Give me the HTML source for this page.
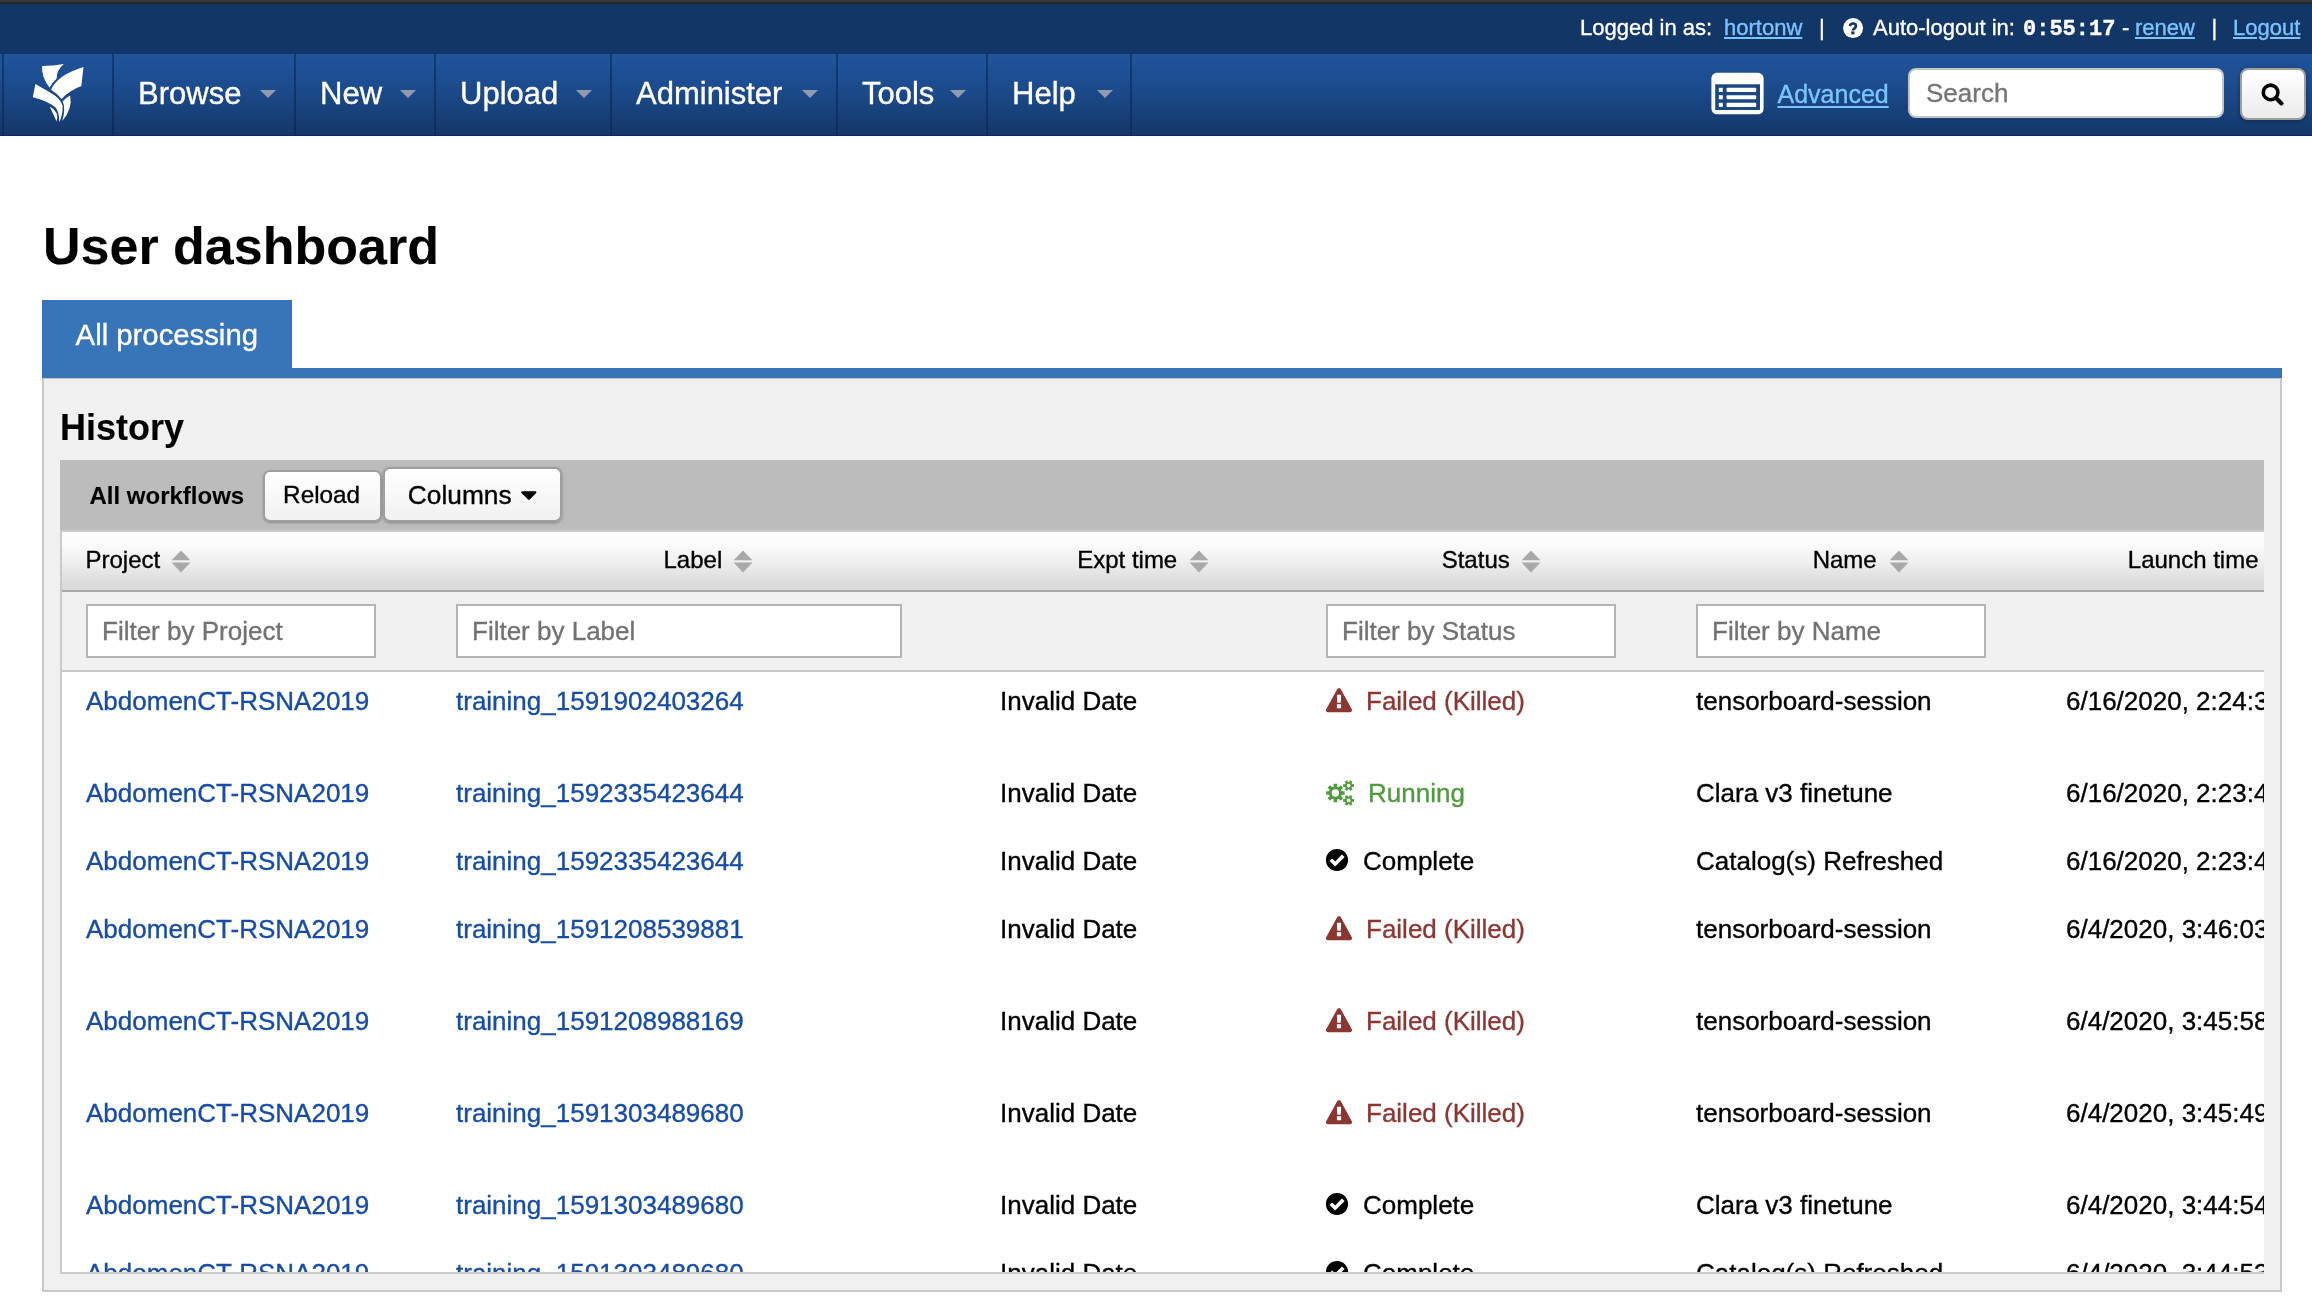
<!DOCTYPE html>
<html lang="en">
<head>
<meta charset="utf-8">
<title>User dashboard</title>
<style>
*{box-sizing:border-box;margin:0;padding:0}
html,body{width:2312px;height:1316px;overflow:hidden;background:#fff}
body{font-family:"Liberation Sans",sans-serif;color:#000;position:relative;-webkit-text-stroke:0.35px}
#root{position:absolute;left:0;top:0;width:2312px;height:1316px;will-change:transform}
.abs{position:absolute}
a{color:inherit;text-decoration:none}
/* ---------- top chrome strip ---------- */
#strip{left:0;top:0;width:2312px;height:4px;background:linear-gradient(#36373a 0,#36373a 2px,#282725 2px,#282725 4px)}
/* ---------- user bar ---------- */
#userbar{left:0;top:4px;width:2312px;height:50px;background:#123766;color:#fff;font-size:22px;line-height:48px;white-space:nowrap}
#userbar .t{position:absolute;top:0}
#userbar a{color:#7cc3ff;text-decoration:underline}
/* ---------- main nav ---------- */
#nav{left:0;top:54px;width:2312px;height:82px;background:linear-gradient(#20539a 0%,#1d4d90 35%,#18427c 70%,#143768 100%);border-bottom:1px solid #082a64}
#nav .sep{position:absolute;top:0;width:2px;height:81px;background:rgba(10,35,80,.55)}
#nav .item{position:absolute;top:0;height:81px;line-height:80px;color:#fff;font-size:31px;white-space:nowrap}
#nav .caret{position:absolute;top:36px;width:0;height:0;border-left:8px solid transparent;border-right:8px solid transparent;border-top:8px solid #929aad}
#adv{color:#7cc4ff;font-size:25px;line-height:78px;text-decoration:underline;text-decoration-thickness:2px;text-underline-offset:3px;white-space:nowrap}
#sbox{left:1908px;top:14px;width:316px;height:50px;background:#fff;border:2px solid #c4c4c4;border-radius:8px;font-size:26px;color:#757575;line-height:47px;padding-left:16px}
#sbtn{left:2240px;top:14px;width:66px;height:52px;border:2px solid #a19e99;border-radius:8px;background:linear-gradient(#fff,#ebebeb);box-shadow:0 1px 4px rgba(0,0,0,.35)}
/* ---------- page title ---------- */
#title{-webkit-text-stroke:0.1px;left:43px;top:212px;font-size:52px;font-weight:bold;line-height:68px;white-space:nowrap}
/* ---------- tab ---------- */
#tab{left:42px;top:300px;width:250px;height:70px;background:#3775b8;color:#fff;font-size:29.3px;line-height:70px;padding-left:33.6px;white-space:nowrap}
#tabline{left:42px;top:368px;width:2240px;height:10px;background:#3775b8}
/* ---------- panel ---------- */
#panel{left:42px;top:378px;width:2240px;height:914px;background:#f0f0f0;border:2px solid #c9c9c9;border-top:1.5px solid #c4c4c4}
#history{-webkit-text-stroke:0.1px;left:60px;top:405px;font-size:36px;font-weight:bold;line-height:46px}
#tbl{left:60px;top:460px;width:2204px;height:814px;background:#fff;overflow:hidden}
.tb{background:#bcbcbc}
.b24{-webkit-text-stroke:0.1px;font-size:24px;font-weight:bold;line-height:28px;white-space:nowrap}
.btn{border:2px solid #9e9e9e;border-radius:7px;background:linear-gradient(#fff,#f1f1f1);white-space:nowrap;color:#000}
.lb,.bb{background:#cacaca}
.hd{background:linear-gradient(#fdfdfd 0,#fbfbfb 13px,#efefef 29px,#e2e2e2 44px,#dcdcdc 52px,#dbdbdb 58px,#a9a9a9 58px,#a9a9a9 60px)}
.th{font-size:24px;line-height:28px;white-space:nowrap}
.fr{background:linear-gradient(#f0f0f0 0,#f0f0f0 78px,#c8c8c8 78px,#c8c8c8 80px)}
.fi{height:54px;border:2px solid #b4b4b4;background:#fff;font-size:26px;line-height:50px;color:#727272;padding-left:14px;white-space:nowrap;overflow:hidden}
.td{font-size:26px;line-height:30px;white-space:nowrap}
.lk{color:#184da5}
</style>
</head>
<body>
<div id="root">
<div id="strip" class="abs"></div>
<div id="userbar" class="abs">
<span class="t" style="left:1580px">Logged in as:</span>
<a class="t" style="left:1724px">hortonw</a>
<span class="t" style="left:1819px">|</span>
<svg class="t" style="left:1842.6px;top:13.9px" width="21" height="21" viewBox="0 0 21 21"><circle cx="10.1" cy="10.1" r="10" fill="#fff"/><path d="M7 8.1C7.3 6.3 8.5 5.5 10 5.5C11.7 5.5 12.9 6.5 12.9 8C12.9 9.3 12.1 9.9 11.2 10.6C10.3 11.2 9.9 11.7 9.9 12.5" fill="none" stroke="#123766" stroke-width="2.7"/><rect x="8.3" y="13.4" width="3.2" height="3" fill="#123766"/></svg>
<span class="t" style="left:1873px">Auto-logout in:</span>
<span class="t" style="left:2023px;font-family:'Liberation Mono',monospace;font-weight:bold;font-size:22px;top:1.5px">0:55:17</span>
<span class="t" style="left:2122px">-</span>
<a class="t" style="left:2135px">renew</a>
<span class="t" style="left:2211.5px">|</span>
<a class="t" style="left:2233px">Logout</a>
</div>
<div id="nav" class="abs">
<div class="sep" style="left:2px"></div>
<div class="sep" style="left:112px"></div>
<svg class="abs" style="left:20px;top:1px" width="80" height="75" viewBox="20 55 80 75" fill="#fff">
<path d="M42.2 66.1Q53 65.9 63.9 64.1Q56.3 70.5 56.7 78.4Q52.3 82.2 49.6 87.8Q41 76.5 42.2 66.1Z"/>
<path d="M83.5 67L81.3 86.1Q69.5 90.5 61.6 98.9Q57 93.5 51.1 89.8C55 80 66 72.5 83.5 67Z"/>
<path d="M35.4 84.1L32.8 97.2Q49 101.5 55.5 107.5Q59.3 112 59.3 122.2Q63.5 113 62.5 105.5Q60.5 98.5 51 93Z"/>
<path d="M49.7 106.6L56.6 121.4Q59.6 111.8 49.7 106.6Z"/>
<path d="M70.1 95.5Q65.5 98 62.7 101.2Q66 109 62.2 121.1Q73 108.5 70.1 95.5Z"/>
</svg>
<div class="item" style="left:138px">Browse</div><div class="caret" style="left:260px"></div><div class="sep" style="left:294px"></div>
<div class="item" style="left:320px">New</div><div class="caret" style="left:400px"></div><div class="sep" style="left:434px"></div>
<div class="item" style="left:460px">Upload</div><div class="caret" style="left:576px"></div><div class="sep" style="left:610px"></div>
<div class="item" style="left:636px">Administer</div><div class="caret" style="left:802px"></div><div class="sep" style="left:836px"></div>
<div class="item" style="left:862px">Tools</div><div class="caret" style="left:950px"></div><div class="sep" style="left:986px"></div>
<div class="item" style="left:1012px">Help</div><div class="caret" style="left:1097px"></div><div class="sep" style="left:1130px"></div>
<svg class="abs" style="left:1711px;top:18px" width="54" height="44" viewBox="0 0 54 44"><rect x="0.4" y="0.8" width="52.2" height="41.5" rx="5.5" fill="#fff"/><rect x="4.2" y="12.3" width="44.8" height="25.7" fill="#1b4783"/><g fill="#fff"><rect x="7.8" y="15.8" width="4" height="4.1"/><rect x="15.5" y="15.8" width="29.7" height="4.1" rx="1"/><rect x="7.8" y="23.2" width="4" height="4.1"/><rect x="15.5" y="23.2" width="29.7" height="4.1" rx="1"/><rect x="7.8" y="30.8" width="4" height="4.1"/><rect x="15.5" y="30.8" width="29.7" height="4.1" rx="1"/></g></svg>
<a class="abs" id="adv" style="left:1777.5px;top:1px">Advanced</a>
<div class="abs" id="sbox"><span>Search</span></div>
<div class="abs" id="sbtn"><svg width="30" height="30" viewBox="0 0 30 30" style="position:absolute;left:16px;top:10.2px"><circle cx="12.6" cy="12.4" r="7.3" fill="none" stroke="#000" stroke-width="3.6"/><path d="M18 18L23.5 23.4" stroke="#000" stroke-width="4.2" stroke-linecap="round"/></svg></div>
</div>
<div id="title" class="abs">User dashboard</div>
<div id="tab" class="abs">All processing</div>
<div id="tabline" class="abs"></div>
<div id="panel" class="abs"></div>
<div id="history" class="abs">History</div>
<div id="tbl" class="abs">
<div class="tb abs" style="left:0;top:0;width:2204px;height:70px"></div>
<div class="abs b24" style="left:29.5px;top:22.3px">All workflows</div>
<div class="btn abs" style="left:202.5px;top:10px;width:119.5px;height:51.5px;font-size:24.3px;line-height:46px;padding-left:18.6px;box-shadow:0 1px 2px rgba(0,0,0,.25)">Reload</div>
<div class="btn abs" style="left:322.8px;top:6.5px;width:179.6px;height:55.8px;font-size:26.3px;line-height:53px;padding-left:23px;box-shadow:0 1px 3px rgba(0,0,0,.3)">Columns<svg class="abs" style="left:136.5px;top:22.5px" width="16" height="10" viewBox="0 0 16 10"><path d="M1.2 0.3h13.2a1 1 0 0 1 .75 1.7l-6.4 6.6a1.2 1.2 0 0 1-1.7 0L.5 2A1 1 0 0 1 1.2.3z" fill="#000"/></svg></div>
<div class="lb abs" style="left:0;top:70px;width:2px;height:744px"></div>
<div class="lb abs" style="left:0;top:70px;width:2204px;height:2px"></div>
<div class="hd abs" style="left:2px;top:72px;width:2202px;height:60px"></div>
<div class="abs th" style="left:25.5px;top:86px">Project</div>
<svg class="abs" style="left:111.2px;top:89.5px" width="20" height="23" viewBox="0 0 20 23"><path d="M10 .5l9.4 9.8H.6z" fill="#a9a9a9"/><path d="M10 22.5L.6 12.6h18.8z" fill="#a9a9a9"/></svg>
<div class="abs th" style="left:603.5px;top:86px">Label</div>
<svg class="abs" style="left:673px;top:89.5px" width="20" height="23" viewBox="0 0 20 23"><path d="M10 .5l9.4 9.8H.6z" fill="#a9a9a9"/><path d="M10 22.5L.6 12.6h18.8z" fill="#a9a9a9"/></svg>
<div class="abs th" style="left:1017.2px;top:86px">Expt time</div>
<svg class="abs" style="left:1129.2px;top:89.5px" width="20" height="23" viewBox="0 0 20 23"><path d="M10 .5l9.4 9.8H.6z" fill="#a9a9a9"/><path d="M10 22.5L.6 12.6h18.8z" fill="#a9a9a9"/></svg>
<div class="abs th" style="left:1381.7px;top:86px">Status</div>
<svg class="abs" style="left:1461px;top:89.5px" width="20" height="23" viewBox="0 0 20 23"><path d="M10 .5l9.4 9.8H.6z" fill="#a9a9a9"/><path d="M10 22.5L.6 12.6h18.8z" fill="#a9a9a9"/></svg>
<div class="abs th" style="left:1752.7px;top:86px">Name</div>
<svg class="abs" style="left:1829px;top:89.5px" width="20" height="23" viewBox="0 0 20 23"><path d="M10 .5l9.4 9.8H.6z" fill="#a9a9a9"/><path d="M10 22.5L.6 12.6h18.8z" fill="#a9a9a9"/></svg>
<div class="abs th" style="left:2067.8px;top:86px">Launch time</div>
<div class="fr abs" style="left:2px;top:132px;width:2202px;height:80px"></div>
<div class="fi abs" style="left:26px;top:144px;width:290px">Filter by Project</div>
<div class="fi abs" style="left:396px;top:144px;width:446px">Filter by Label</div>
<div class="fi abs" style="left:1266px;top:144px;width:290px">Filter by Status</div>
<div class="fi abs" style="left:1636px;top:144px;width:290px">Filter by Name</div>
<a class="abs td lk" style="left:26px;top:226px">AbdomenCT-RSNA2019</a>
<a class="abs td lk" style="left:396px;top:226px">training_1591902403264</a>
<div class="abs td" style="left:940px;top:226px">Invalid Date</div>
<svg class="abs" style="left:1265px;top:227px" width="28" height="26" viewBox="0 0 28 26"><path d="M14 1.2c.9 0 1.6.5 2 1.3l10.8 19.7c.8 1.5-.2 3-1.9 3H3.1c-1.7 0-2.7-1.5-1.9-3L12 2.5c.4-.8 1.1-1.3 2-1.3z" fill="#8c3634"/><path d="M11.9 7.8h4.2l-.3 8h-3.6zM11.9 17.2h4.2v4h-4.2z" fill="#fff"/></svg>
<div class="abs td" style="left:1306px;top:226px;color:#8c3634">Failed (Killed)</div>
<div class="abs td" style="left:1636px;top:226px">tensorboard-session</div>
<div class="abs td" style="left:2006px;top:226px">6/16/2020, 2:24:31 PM</div>
<a class="abs td lk" style="left:26px;top:318px">AbdomenCT-RSNA2019</a>
<a class="abs td lk" style="left:396px;top:318px">training_1592335423644</a>
<div class="abs td" style="left:940px;top:318px">Invalid Date</div>
<svg class="abs" style="left:1265.5px;top:319.5px" width="29" height="27" viewBox="0 0 29 27"><path fill-rule="evenodd" fill="#509a40" d="M15.55 10.6L15.76 11.24L18.61 11.13L18.61 14.87L15.76 14.76L15.45 15.65L15.14 16.25L17.23 18.19L14.59 20.83L12.65 18.74L11.8 19.15L11.16 19.36L11.27 22.21L7.53 22.21L7.64 19.36L6.75 19.05L6.15 18.74L4.21 20.83L1.57 18.19L3.66 16.25L3.25 15.4L3.04 14.76L0.19 14.87L0.19 11.13L3.04 11.24L3.35 10.35L3.66 9.75L1.57 7.81L4.21 5.17L6.15 7.26L7 6.85L7.64 6.64L7.53 3.79L11.27 3.79L11.16 6.64L12.05 6.95L12.65 7.26L14.59 5.17L17.23 7.81L15.14 9.75ZM13.1 13A3.7 3.7 0 1 0 5.7 13A3.7 3.7 0 1 0 13.1 13ZM25.84 3.81L26.06 4.28L28 4.11L28 7.09L26.06 6.92L25.77 7.51L25.47 7.93L26.59 9.53L24 11.02L23.19 9.25L22.53 9.3L22.01 9.25L21.2 11.02L18.61 9.53L19.73 7.93L19.36 7.39L19.14 6.92L17.2 7.09L17.2 4.11L19.14 4.28L19.43 3.69L19.73 3.27L18.61 1.67L21.2 0.18L22.01 1.95L22.67 1.9L23.19 1.95L24 0.18L26.59 1.67L25.47 3.27ZM24.5 5.6A1.9 1.9 0 1 0 20.7 5.6A1.9 1.9 0 1 0 24.5 5.6ZM25.84 18.61L26.06 19.08L28 18.91L28 21.89L26.06 21.72L25.77 22.31L25.47 22.73L26.59 24.33L24 25.82L23.19 24.05L22.53 24.1L22.01 24.05L21.2 25.82L18.61 24.33L19.73 22.73L19.36 22.19L19.14 21.72L17.2 21.89L17.2 18.91L19.14 19.08L19.43 18.49L19.73 18.07L18.61 16.47L21.2 14.98L22.01 16.75L22.67 16.7L23.19 16.75L24 14.98L26.59 16.47L25.47 18.07ZM24.5 20.4A1.9 1.9 0 1 0 20.7 20.4A1.9 1.9 0 1 0 24.5 20.4Z"/></svg>
<div class="abs td" style="left:1308px;top:318px;color:#509a40">Running</div>
<div class="abs td" style="left:1636px;top:318px">Clara v3 finetune</div>
<div class="abs td" style="left:2006px;top:318px">6/16/2020, 2:23:47 PM</div>
<a class="abs td lk" style="left:26px;top:386px">AbdomenCT-RSNA2019</a>
<a class="abs td lk" style="left:396px;top:386px">training_1592335423644</a>
<div class="abs td" style="left:940px;top:386px">Invalid Date</div>
<svg class="abs" style="left:1265px;top:388px" width="24" height="24" viewBox="0 0 24 24"><circle cx="12" cy="12" r="11.1" fill="#000"/><path d="M5.8 11.7l4.4 4.3 8.1-8.3" fill="none" stroke="#fff" stroke-width="3.7"/></svg>
<div class="abs td" style="left:1303px;top:386px">Complete</div>
<div class="abs td" style="left:1636px;top:386px">Catalog(s) Refreshed</div>
<div class="abs td" style="left:2006px;top:386px">6/16/2020, 2:23:46 PM</div>
<a class="abs td lk" style="left:26px;top:454px">AbdomenCT-RSNA2019</a>
<a class="abs td lk" style="left:396px;top:454px">training_1591208539881</a>
<div class="abs td" style="left:940px;top:454px">Invalid Date</div>
<svg class="abs" style="left:1265px;top:455px" width="28" height="26" viewBox="0 0 28 26"><path d="M14 1.2c.9 0 1.6.5 2 1.3l10.8 19.7c.8 1.5-.2 3-1.9 3H3.1c-1.7 0-2.7-1.5-1.9-3L12 2.5c.4-.8 1.1-1.3 2-1.3z" fill="#8c3634"/><path d="M11.9 7.8h4.2l-.3 8h-3.6zM11.9 17.2h4.2v4h-4.2z" fill="#fff"/></svg>
<div class="abs td" style="left:1306px;top:454px;color:#8c3634">Failed (Killed)</div>
<div class="abs td" style="left:1636px;top:454px">tensorboard-session</div>
<div class="abs td" style="left:2006px;top:454px">6/4/2020, 3:46:03 PM</div>
<a class="abs td lk" style="left:26px;top:546px">AbdomenCT-RSNA2019</a>
<a class="abs td lk" style="left:396px;top:546px">training_1591208988169</a>
<div class="abs td" style="left:940px;top:546px">Invalid Date</div>
<svg class="abs" style="left:1265px;top:547px" width="28" height="26" viewBox="0 0 28 26"><path d="M14 1.2c.9 0 1.6.5 2 1.3l10.8 19.7c.8 1.5-.2 3-1.9 3H3.1c-1.7 0-2.7-1.5-1.9-3L12 2.5c.4-.8 1.1-1.3 2-1.3z" fill="#8c3634"/><path d="M11.9 7.8h4.2l-.3 8h-3.6zM11.9 17.2h4.2v4h-4.2z" fill="#fff"/></svg>
<div class="abs td" style="left:1306px;top:546px;color:#8c3634">Failed (Killed)</div>
<div class="abs td" style="left:1636px;top:546px">tensorboard-session</div>
<div class="abs td" style="left:2006px;top:546px">6/4/2020, 3:45:58 PM</div>
<a class="abs td lk" style="left:26px;top:638px">AbdomenCT-RSNA2019</a>
<a class="abs td lk" style="left:396px;top:638px">training_1591303489680</a>
<div class="abs td" style="left:940px;top:638px">Invalid Date</div>
<svg class="abs" style="left:1265px;top:639px" width="28" height="26" viewBox="0 0 28 26"><path d="M14 1.2c.9 0 1.6.5 2 1.3l10.8 19.7c.8 1.5-.2 3-1.9 3H3.1c-1.7 0-2.7-1.5-1.9-3L12 2.5c.4-.8 1.1-1.3 2-1.3z" fill="#8c3634"/><path d="M11.9 7.8h4.2l-.3 8h-3.6zM11.9 17.2h4.2v4h-4.2z" fill="#fff"/></svg>
<div class="abs td" style="left:1306px;top:638px;color:#8c3634">Failed (Killed)</div>
<div class="abs td" style="left:1636px;top:638px">tensorboard-session</div>
<div class="abs td" style="left:2006px;top:638px">6/4/2020, 3:45:49 PM</div>
<a class="abs td lk" style="left:26px;top:730px">AbdomenCT-RSNA2019</a>
<a class="abs td lk" style="left:396px;top:730px">training_1591303489680</a>
<div class="abs td" style="left:940px;top:730px">Invalid Date</div>
<svg class="abs" style="left:1265px;top:732px" width="24" height="24" viewBox="0 0 24 24"><circle cx="12" cy="12" r="11.1" fill="#000"/><path d="M5.8 11.7l4.4 4.3 8.1-8.3" fill="none" stroke="#fff" stroke-width="3.7"/></svg>
<div class="abs td" style="left:1303px;top:730px">Complete</div>
<div class="abs td" style="left:1636px;top:730px">Clara v3 finetune</div>
<div class="abs td" style="left:2006px;top:730px">6/4/2020, 3:44:54 PM</div>
<a class="abs td lk" style="left:26px;top:798px">AbdomenCT-RSNA2019</a>
<a class="abs td lk" style="left:396px;top:798px">training_1591303489680</a>
<div class="abs td" style="left:940px;top:798px">Invalid Date</div>
<svg class="abs" style="left:1265px;top:800px" width="24" height="24" viewBox="0 0 24 24"><circle cx="12" cy="12" r="11.1" fill="#000"/><path d="M5.8 11.7l4.4 4.3 8.1-8.3" fill="none" stroke="#fff" stroke-width="3.7"/></svg>
<div class="abs td" style="left:1303px;top:798px">Complete</div>
<div class="abs td" style="left:1636px;top:798px">Catalog(s) Refreshed</div>
<div class="abs td" style="left:2006px;top:798px">6/4/2020, 3:44:53 PM</div>
<div class="bb abs" style="left:0;top:812px;width:2204px;height:2px"></div>
</div><!--/tbl-->
</div>
</body>
</html>
